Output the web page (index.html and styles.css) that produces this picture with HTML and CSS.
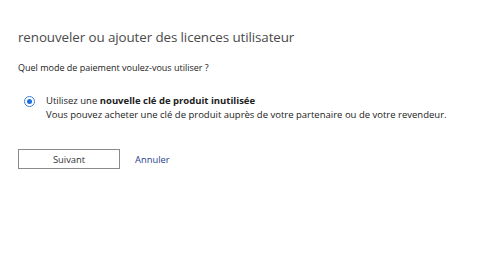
FILE: index.html
```html
<!DOCTYPE html>
<html lang="fr">
<head>
<meta charset="utf-8">
<link rel="stylesheet" href="styles.css">
</head>
<body>
<div class="page">
  <h1 class="title">renouveler ou ajouter des licences utilisateur</h1>
  <p class="question">Quel mode de paiement voulez-vous utiliser ?</p>
  <div class="option">
    <span class="radio"><span class="dot"></span></span>
    <div class="option-text">
      <div>Utilisez une <b>nouvelle clé de produit inutilisée</b></div>
      <div>Vous pouvez acheter une clé de produit auprès de votre partenaire ou de votre revendeur.</div>
    </div>
  </div>
  <div class="actions">
    <button class="btn">Suivant</button>
    <a class="link">Annuler</a>
  </div>
</div>
</body>
</html>
```
FILE: styles.css
```css
html, body { margin: 0; padding: 0; background: #fff; }
body { font-family: "Open Sans", "Noto Sans", sans-serif; color: #222; }
.page { padding: 27px 18px 0 18px; }
.title { margin: 0; font-size: 13.4px; font-weight: 400; color: #4a4a4a; line-height: 20px; letter-spacing: -0.1px; }
.question { margin: 15px 0 0 0; font-size: 9px; line-height: 12px; color: #222; }
.option { display: flex; align-items: flex-start; margin-top: 20px; padding-left: 6px; gap: 11px; }
.radio { width: 9px; height: 9px; border: 1px solid #3b7fd6; border-radius: 50%; display: flex; align-items: center; justify-content: center; margin-top: 2px; flex: none; }
.dot { width: 5px; height: 5px; border-radius: 50%; background: #1f6fd8; }
.option-text { font-size: 9.5px; line-height: 14px; color: #222; }
.option-text b { font-weight: 700; }
.actions { display: flex; align-items: center; margin-top: 27px; gap: 15px; }
.btn { width: 102px; height: 20px; border: 1px solid #8a8a8a; background: #fff; font-family: inherit; font-size: 9.4px; color: #333; padding: 0; }
.link { font-size: 9.4px; color: #2b3f8e; }
```
